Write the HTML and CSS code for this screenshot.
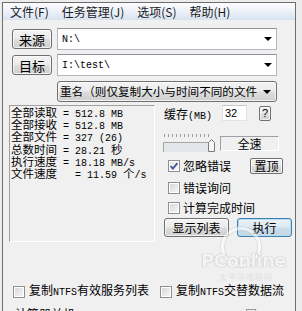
FILE: index.html
```html
<!DOCTYPE html>
<html>
<head>
<meta charset="utf-8">
<link rel="stylesheet" href="styles.css">
</head>
<body>
<div class="window">
  <div class="menubar">
    <span>文件(F)</span><span>任务管理(J)</span><span>选项(S)</span><span>帮助(H)</span>
  </div>

  <div class="path-row first">
    <button class="btn path-btn">来源</button>
    <div class="combo"><span class="mono">N:\</span><span class="arrow"></span></div>
  </div>
  <div class="path-row">
    <button class="btn path-btn">目标</button>
    <div class="combo"><span class="mono">I:\test\</span><span class="arrow"></span></div>
  </div>

  <div class="mode-row">
    <button class="btn mode-btn"><span class="mode-text">重名（则仅复制大小与时间不同的文件</span><span class="arrow"></span></button>
  </div>

  <div class="main">
    <div class="stats">
      <div class="line">全部读取<span class="mono"> = 512.8 MB</span></div>
      <div class="line">全部接收<span class="mono"> = 512.8 MB</span></div>
      <div class="line">全部文件<span class="mono"> = 327 (26)</span></div>
      <div class="line">总数时间<span class="mono"> = 28.21 </span>秒</div>
      <div class="line">执行速度<span class="mono"> = 18.18 MB/s</span></div>
      <div class="line">文件速度<span class="mono">   = 11.59 </span>个<span class="mono">/s</span></div>
    </div>

    <div class="side">
      <div class="cache-row">
        <span class="cache-label">缓存<span class="mono">(MB)</span></span>
        <div class="num-input">32</div>
        <button class="btn help-btn">?</button>
      </div>

      <div class="speed-row">
        <svg class="slider" width="54" height="22" viewBox="0 0 54 22">
          <g stroke="#9c9c9c" stroke-width="1">
            <path d="M1.5 4v3M5.5 4v3M9.5 4v3M13.5 4v3M17.5 4v3M21.5 4v3M25.5 4v3M29.5 4v3M33.5 4v3M37.5 4v3M41.5 4v3M45.5 4v3"/>
          </g>
          <rect x="0" y="12" width="48" height="10" fill="#e3e6eb"/>
          <path d="M0.5 22V12.5H46" fill="none" stroke="#a3a3a3"/>
          <path d="M45.5 21.5V12.5L48.5 9.5L51.5 12.5V21.5Z" fill="#f6f6f6" stroke="#7c7c7c"/>
        </svg>
        <div class="speed-box">全速</div>
      </div>

      <div class="check-row">
        <span class="cb checked"><svg width="10" height="10" viewBox="0 0 10 10"><path d="M1.6 5.2L3.9 7.6L8.4 2.2" fill="none" stroke="#3d5895" stroke-width="1.8"/></svg></span>
        <span class="cb-label">忽略错误</span>
        <button class="btn top-btn">置顶</button>
      </div>
      <div class="check-row small">
        <span class="cb"></span>
        <span class="cb-label">错误询问</span>
      </div>
      <div class="check-row small">
        <span class="cb"></span>
        <span class="cb-label">计算完成时间</span>
      </div>

      <div class="action-row">
        <button class="btn list-btn">显示列表</button>
        <button class="btn run-btn">执行</button>
      </div>
    </div>
  </div>

  <div class="bottom-opts">
    <div class="opt first-opt">
      <span class="cb"></span>
      <span class="cb-label">复制<span class="mono">NTFS</span>有效服务列表</span>
    </div>
    <div class="opt">
      <span class="cb"></span>
      <span class="cb-label">复制<span class="mono">NTFS</span>交替数据流</span>
    </div>
  </div>

  <div class="cut-row">
    <span>计算器关机</span><span class="cut-right">□</span>
  </div>

  <div class="watermark">
    <div class="wm-ring"></div>
    <div class="wm-text">PConline</div>
    <div class="wm-sub">太平洋电脑网</div>
  </div>
</div>
</body>
</html>
```

FILE: styles.css
```css
* {
  box-sizing: border-box;
}

html,
body {
  margin: 0;
  padding: 0;
}

body {
  width: 302px;
  height: 311px;
  overflow: hidden;
  background: #ececec;
  font-family: "Noto Sans CJK SC", "Liberation Sans", sans-serif;
  font-size: 12px;
  color: #000;
}

.window {
  position: relative;
  margin: 2px 0 0 2px;
  width: 294px;
  height: 320px;
  border: 1px solid #6e6e6e;
  border-bottom: none;
  background: #f0f0f0;
}

.mono {
  font-family: "Liberation Mono", monospace;
  font-size: 10px;
}

/* menu */
.menubar {
  height: 17px;
  display: flex;
  align-items: center;
  gap: 13px;
  padding-left: 7px;
  background: linear-gradient(#fdfdfe, #eaf0f8 55%, #d7e2f1);
  color: #1b1b1b;
  font-size: 12px;
  line-height: 17px;
}

/* buttons */
.btn {
  display: flex;
  align-items: center;
  justify-content: center;
  padding: 0;
  margin: 0;
  font-family: "Noto Sans CJK SC", "Liberation Sans", sans-serif;
  font-size: 12px;
  line-height: 1;
  color: #000;
  border: 1px solid #707070;
  border-radius: 3px;
  background: linear-gradient(#f3f3f3, #ebebeb 48%, #dddddd 52%, #cfcfcf);
  box-shadow: inset 0 0 0 1px rgba(255, 255, 255, 0.7);
}

/* path rows */
.path-row {
  display: flex;
  align-items: center;
  gap: 5px;
  height: 22px;
  margin-top: 4px;
  padding-left: 9px;
}

.path-row.first {
  margin-top: 8px;
}

.path-btn {
  width: 40px;
  height: 20px;
  font-size: 13px;
}

.combo {
  display: flex;
  align-items: center;
  width: 220px;
  height: 22px;
  padding-left: 4px;
  background: #fff;
  border: 1px solid #b4b7bd;
  border-top-color: #8e9298;
}

.combo .mono {
  font-size: 10px;
}

.arrow {
  width: 0;
  height: 0;
  margin-left: auto;
  margin-right: 4px;
  border-left: 4px solid transparent;
  border-right: 4px solid transparent;
  border-top: 4px solid #000;
}

/* mode row */
.mode-row {
  margin-top: 5px;
  padding-left: 54px;
}

.mode-btn {
  justify-content: flex-start;
  width: 220px;
  height: 21px;
  padding-left: 2px;
}

.mode-text {
  font-size: 11.6px;
  white-space: nowrap;
}

.mode-btn .arrow {
  margin-right: 5px;
}

/* main */
.main {
  display: flex;
  margin-top: 3px;
}

.stats {
  width: 146px;
  height: 137px;
  margin-left: 6px;
  padding-left: 1px;
  border: 1px solid;
  border-color: #a0a0a0 #ffffff #ffffff #a0a0a0;
}

.line {
  height: 12.2px;
  line-height: 12px;
  font-size: 11.5px;
  white-space: pre;
}

.side {
  width: 135px;
  margin-left: 5px;
}

.cache-row {
  display: flex;
  align-items: center;
  height: 16px;
  padding-left: 4px;
}

.cache-label {
  width: 48px;
  white-space: nowrap;
  font-size: 12px;
}

.num-input {
  width: 25px;
  height: 16px;
  margin-left: 10px;
  padding-left: 2px;
  background: #fff;
  border: 1px solid #e2e3e5;
  border-top-color: #c6c8cc;
  font-family: "Liberation Sans", sans-serif;
  font-size: 11px;
  line-height: 14px;
}

.help-btn {
  width: 12px;
  height: 15px;
  margin-left: 12px;
  border-radius: 2px;
  font-family: "Liberation Sans", sans-serif;
  font-size: 11px;
}

.speed-row {
  display: flex;
  height: 22px;
  margin-top: 9px;
  padding-left: 3px;
}

.slider {
  display: block;
}

.speed-box {
  width: 59px;
  height: 15px;
  margin-top: 6px;
  margin-left: 3px;
  border: 1px solid;
  border-color: #a0a0a0 #ffffff #ffffff #a0a0a0;
  text-align: center;
  line-height: 13px;
  font-size: 12px;
}

.check-row {
  display: flex;
  align-items: center;
  height: 16px;
  margin-top: 6px;
  padding-left: 8px;
}

.check-row.small {
  height: 12px;
  margin-top: 8px;
}

.cb {
  display: flex;
  align-items: center;
  justify-content: center;
  flex: none;
  width: 12px;
  height: 12px;
  border: 1px solid #8e8f8f;
  background: linear-gradient(135deg, #d6d6d6, #f7f7f7);
  box-shadow: inset 0 0 0 1px #ffffff;
}

.cb.checked {
  background: linear-gradient(135deg, #e2e2e2, #fbfbfb);
}

.cb svg {
  display: block;
}

.cb-label {
  margin-left: 3px;
  line-height: 12px;
  font-size: 12px;
  white-space: nowrap;
}

.top-btn {
  width: 33px;
  height: 16px;
  margin-left: auto;
  margin-right: 12px;
  border-radius: 2px;
}

.action-row {
  display: flex;
  gap: 8px;
  margin-top: 4px;
  padding-left: 4px;
}

.list-btn {
  width: 65px;
  height: 19px;
}

.run-btn {
  width: 55px;
  height: 19px;
  border-color: #3c7fb1;
  background: linear-gradient(#eaf2f7, #dde9f1 48%, #cddde9 52%, #c3d6e4);
  box-shadow: inset 0 0 0 1px #b8dcf2;
}

/* bottom */
.bottom-opts {
  display: flex;
  height: 13px;
  margin-top: 43px;
  padding-left: 10px;
}

.opt {
  display: flex;
  align-items: center;
}

.first-opt {
  width: 147px;
}

.opt .cb-label {
  margin-left: 4px;
}

.cut-row {
  display: flex;
  margin-top: 10px;
  padding-left: 12px;
  line-height: 12px;
  font-size: 12px;
}

.cut-right {
  margin-left: 170px;
  color: #555;
}

/* watermark */
.watermark {
  position: absolute;
  left: 190px;
  top: 224px;
  width: 104px;
  height: 56px;
  pointer-events: none;
}

.wm-ring {
  position: absolute;
  left: 28px;
  top: 0;
  width: 40px;
  height: 40px;
  border-radius: 50%;
  border: 3px solid rgba(255, 255, 255, 0.55);
  box-shadow: 0 0 0 1px rgba(190, 190, 190, 0.35), inset 0 0 0 1px rgba(190, 190, 190, 0.35);
}

.wm-text {
  position: absolute;
  left: 8px;
  top: 24px;
  font-family: "DejaVu Sans", sans-serif;
  font-weight: bold;
  font-size: 18px;
  line-height: 20px;
  letter-spacing: -0.5px;
  color: #f4f4f4;
  text-shadow: 0 0 1px #b9b9b9, 0 0 1px #b9b9b9;
}

.wm-sub {
  position: absolute;
  left: 26px;
  top: 45px;
  font-size: 8px;
  line-height: 9px;
  letter-spacing: 1px;
  color: #e0e0e0;
}
```
